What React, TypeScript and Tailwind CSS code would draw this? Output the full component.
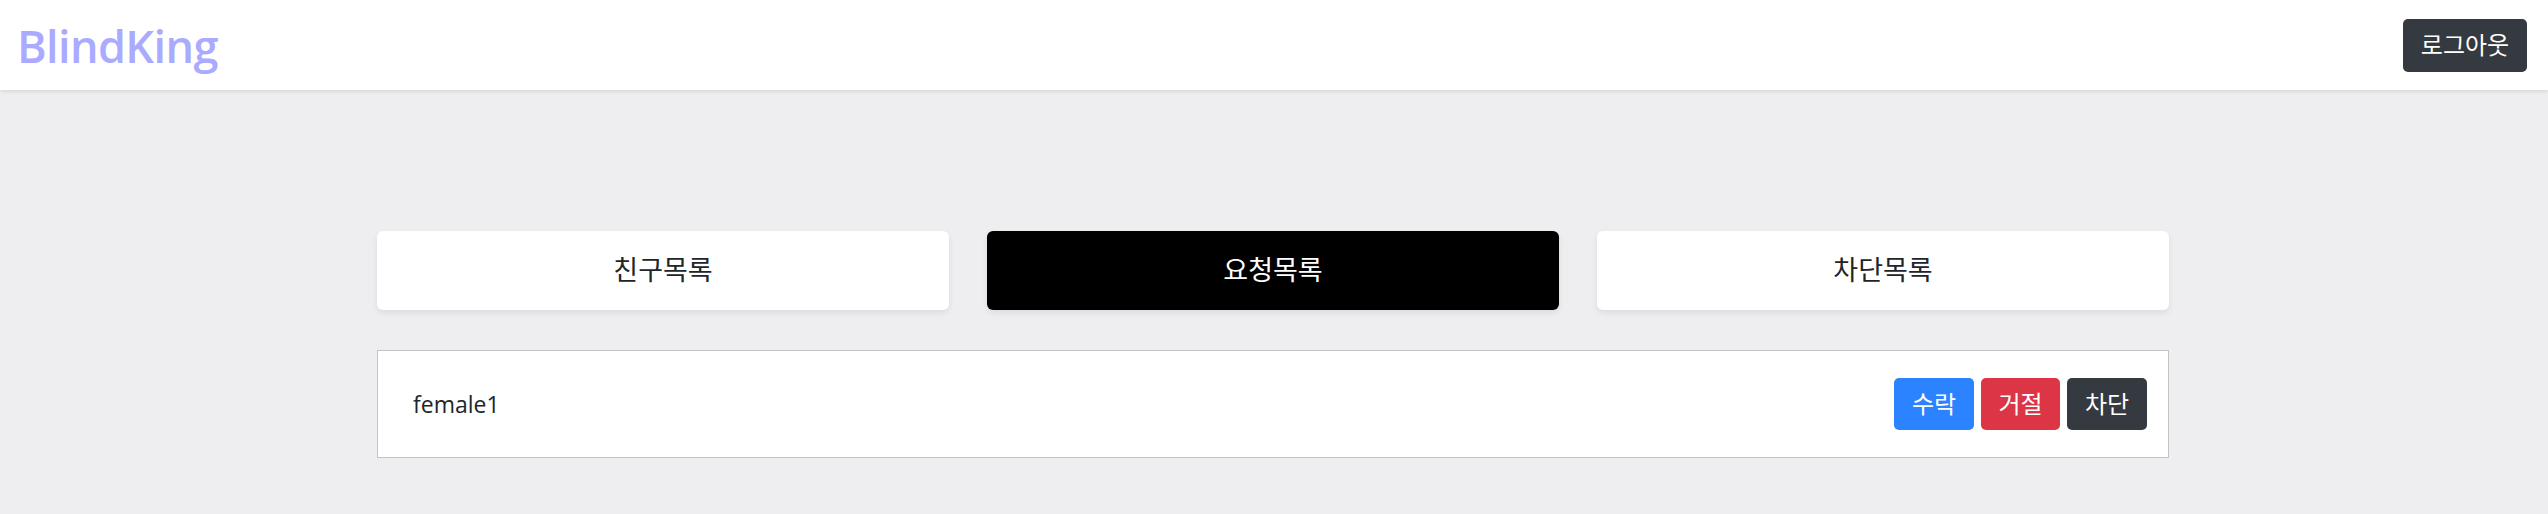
const koFont = "font-['Open_Sans','Noto_Sans_CJK_KR',sans-serif]";

function Btn({ label, color, width }: { label: string; color: string; width: string }) {
  return (
    <button className={`h-[52px] rounded-[5px] text-[24px] text-white ${width} ${color}`}>
      {label}
    </button>
  );
}

export default function App() {
  return (
    <div className={`min-h-[514px] bg-[#eeeef0] ${koFont}`}>
      <header className="flex h-[90px] items-center justify-between bg-white pl-[17px] pr-[21px] shadow-[0_1px_4px_rgba(0,0,0,0.12)]">
        <span className="text-[45px] font-semibold leading-none tracking-[-0.6px] text-[#aaaaff]">BlindKing</span>
        <button className="h-[53px] w-[124px] rounded-[5px] bg-[#343a40] text-[24px] text-white">로그아웃</button>
      </header>

      <main className="ml-[377px] w-[1792px] pt-[141px]">
        <div className="grid grid-cols-3 gap-[38px]">
          <button className="h-[79px] rounded-[6px] bg-white text-[27px] text-[#212529] shadow-[0_3px_6px_rgba(0,0,0,0.075)]">친구목록</button>
          <button className="h-[79px] rounded-[6px] bg-black text-[27px] text-white shadow-[0_3px_6px_rgba(0,0,0,0.075)]">요청목록</button>
          <button className="h-[79px] rounded-[6px] bg-white text-[27px] text-[#212529] shadow-[0_3px_6px_rgba(0,0,0,0.075)]">차단목록</button>
        </div>

        <div className="mt-[40px] flex h-[108px] items-center justify-between border border-[#c4c4c4] bg-white pl-[35px] pr-[21px]">
          <span className="text-[23px] text-[#212529]">female1</span>
          <div className="flex gap-[7px]">
            <Btn label="수락" color="bg-[#2b83ff]" width="w-[80px]" />
            <Btn label="거절" color="bg-[#dc3545]" width="w-[79px]" />
            <Btn label="차단" color="bg-[#343a40]" width="w-[80px]" />
          </div>
        </div>
      </main>
    </div>
  );
}
